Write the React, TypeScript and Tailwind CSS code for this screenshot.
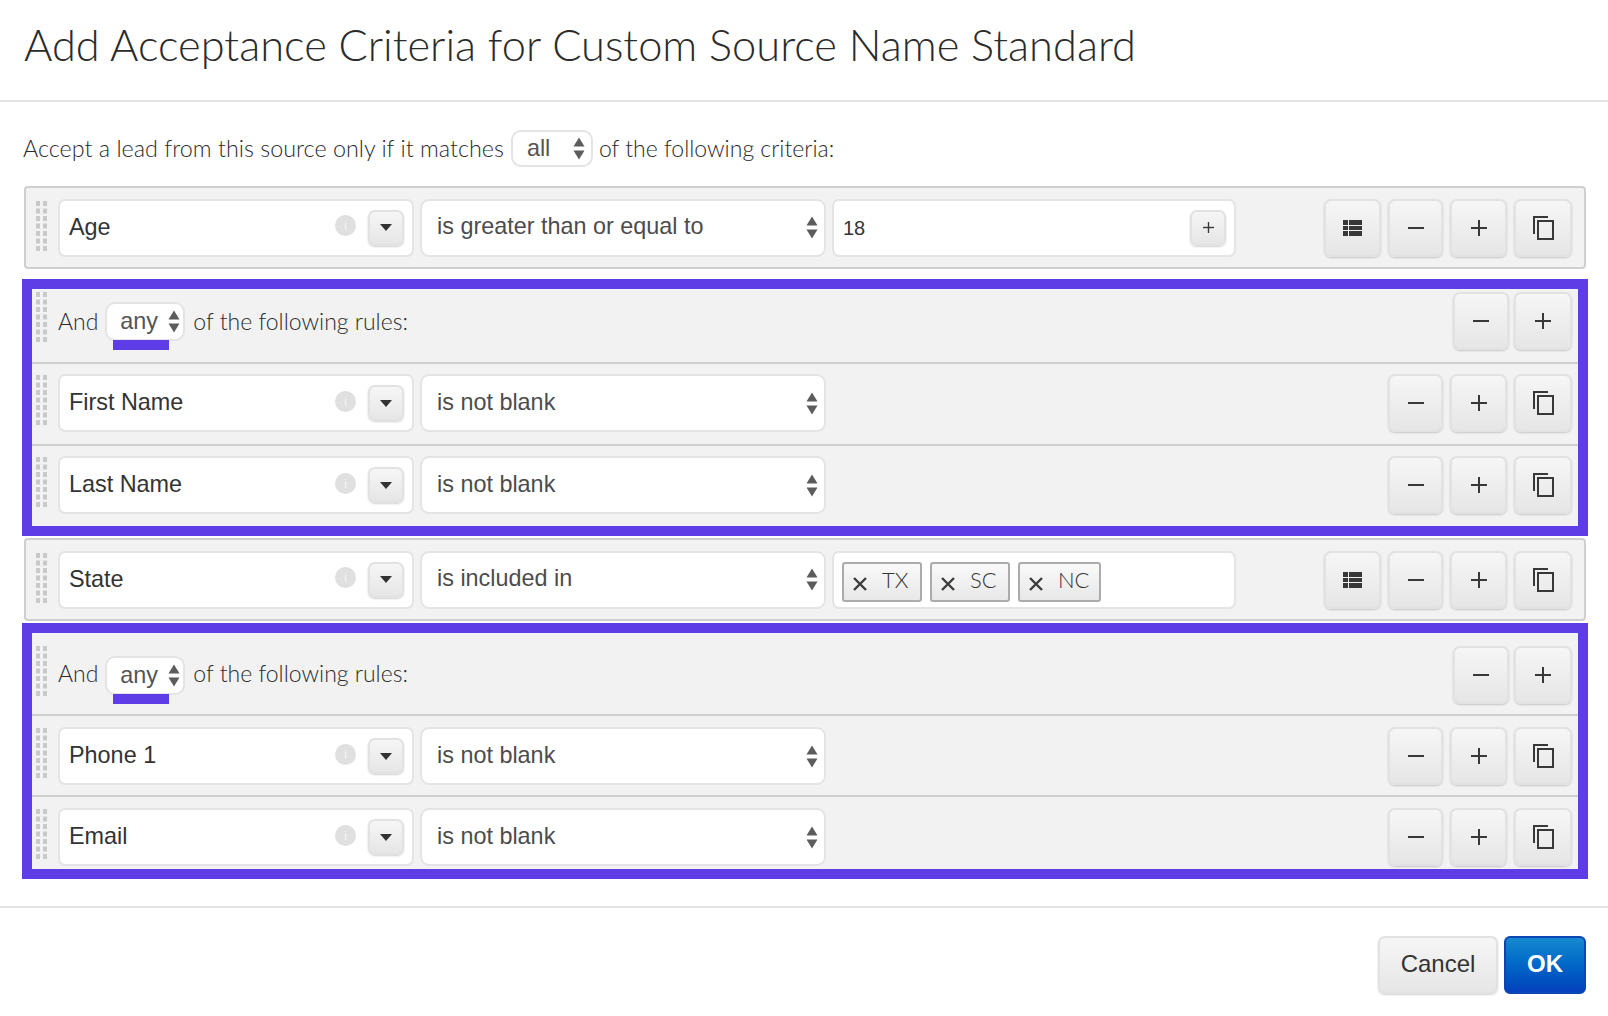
const proxima = "font-['Lato','Noto_Sans',sans-serif]"
const helv = "font-['Liberation_Sans',Arial,sans-serif]"

const btnClass =
  'flex items-center justify-center rounded-[7px] border-2 border-[#e2e2e2] bg-gradient-to-b from-[#f6f6f6] to-[#e6e6e6] shadow-[0_1px_2px_rgba(0,0,0,0.18)]'

const DragHandle = ({ rows = 7 }: { rows?: number }) => (
  <svg width="11" height={rows * 7.5} className="shrink-0">
    {Array.from({ length: rows }).map((_, i) => (
      <g key={i} fill="#c9c9c9">
        <rect x="0" y={i * 7.5} width="4" height="5" />
        <rect x="7" y={i * 7.5} width="4" height="5" />
      </g>
    ))}
  </svg>
)

const UpDown = () => (
  <svg width="12" height="23" viewBox="0 0 12 23" className="shrink-0">
    <path d="M6 0.5 L11.5 9.5 L0.5 9.5 Z" fill="#5c5c5c" />
    <path d="M6 22.5 L11.5 13.5 L0.5 13.5 Z" fill="#5c5c5c" />
  </svg>
)

const MinusIcon = () => (
  <svg width="16" height="16" viewBox="0 0 16 16">
    <rect x="0" y="7" width="16" height="2" fill="#383838" />
  </svg>
)

const PlusIcon = ({ size = 16 }: { size?: number }) => (
  <svg width={size} height={size} viewBox="0 0 16 16">
    <rect x="0" y="7" width="16" height="2" fill="#383838" />
    <rect x="7" y="0" width="2" height="16" fill="#383838" />
  </svg>
)

const CopyIcon = () => (
  <svg width="21" height="24" viewBox="0 0 21 24" fill="none" stroke="#383838" strokeWidth="2">
    <path d="M1 18 V1 H15" />
    <rect x="5" y="5" width="15" height="18" />
  </svg>
)

const TableIcon = () => (
  <svg width="19" height="16" viewBox="0 0 19 16">
    <rect x="0" y="0" width="19" height="16" fill="#383838" />
    <rect x="0" y="5" width="19" height="1" fill="#f0f0f0" />
    <rect x="0" y="10" width="19" height="1" fill="#f0f0f0" />
    <rect x="5" y="0" width="1" height="16" fill="#f0f0f0" />
  </svg>
)

const FieldPicker = ({ label }: { label: string }) => (
  <div className={`flex h-[58px] w-[356px] shrink-0 items-center rounded-[7px] border-2 border-[#e4e4e4] bg-white pl-[9px] pr-[8px] ${helv}`}>
    <span className="flex-1 text-[23.4px] text-[#333]">{label}</span>
    <span className="mr-[12px] mt-[-4px] flex h-[21px] w-[21px] items-center justify-center rounded-full bg-[#e0e0e0] text-[13px] leading-none text-[#f4f4f4]">
      i
    </span>
    <span className={`${btnClass} h-[36px] w-[36px]`}>
      <svg width="12" height="7" viewBox="0 0 12 7">
        <path d="M0 0 H12 L6 7 Z" fill="#333" />
      </svg>
    </span>
  </div>
)

const OperatorSelect = ({ label }: { label: string }) => (
  <div className={`ml-[6px] flex h-[58px] w-[406px] shrink-0 items-center rounded-[9px] border-2 border-[#e4e4e4] bg-white pl-[15px] pr-[6px] ${helv}`}>
    <span className="mt-[-1px] flex-1 text-[23.4px] text-[#4c4c4c]">{label}</span>
    <UpDown />
  </div>
)

const ValueBox = ({ children }: { children: React.ReactNode }) => (
  <div className={`ml-[6px] flex h-[58px] w-[404px] shrink-0 items-center rounded-[7px] border-2 border-[#e4e4e4] bg-white pl-[8px] pr-[8px] ${helv}`}>
    {children}
  </div>
)

const Chip = ({ label, width }: { label: string; width: number }) => (
  <div
    className={`flex h-[40px] shrink-0 items-center rounded-[3px] border-2 border-[#ababab] bg-gradient-to-b from-[#fafafa] to-[#e8e8e8] pl-[9px] ${proxima}`}
    style={{ width }}
  >
    <svg width="14" height="14" viewBox="0 0 14 14" className="mt-[4px]" stroke="#3c3c3c" strokeWidth="2.4" fill="none">
      <path d="M1 1 L13 13 M13 1 L1 13" />
    </svg>
    <span className="ml-[15px] mt-[-4px] text-[22px] font-light text-[#333]">{label}</span>
  </div>
)

const ActionButton = ({ width, children }: { width: number; children: React.ReactNode }) => (
  <div className={`${btnClass} h-[58px] shrink-0`} style={{ width }}>
    {children}
  </div>
)

const RowActions = ({ table = false }: { table?: boolean }) => (
  <div className="ml-auto flex items-center gap-[7px]">
    {table && (
      <ActionButton width={57}>
        <TableIcon />
      </ActionButton>
    )}
    <ActionButton width={55}>
      <MinusIcon />
    </ActionButton>
    <ActionButton width={57}>
      <PlusIcon />
    </ActionButton>
    <ActionButton width={58}>
      <CopyIcon />
    </ActionButton>
  </div>
)

const GroupHead = ({ topPad, textPad, selectClass = '' }: { topPad: string; textPad: string; selectClass?: string }) => (
  <div className={`flex items-start pl-[4px] pr-[6px] ${topPad}`}>
    <DragHandle />
    <div className={`ml-[11px] flex items-center text-[23px] font-light text-[#2b2b2b] ${proxima} ${textPad}`}>
      <span>And</span>
      <div className={`relative ml-[7px] flex h-[39px] w-[80px] items-center rounded-[10px] border-2 border-[#e4e4e4] bg-white pl-[13px] text-[23.4px] text-[#555] ${helv} ${selectClass}`}>
        <span className="flex-1">any</span>
        <span className="mr-[3px]">
          <UpDown />
        </span>
        <div className="absolute left-[6px] top-[36px] h-[10px] w-[56px] bg-[#5f3de6]" />
      </div>
      <span className="ml-[8px]">of the following rules:</span>
    </div>
    <div className="ml-auto flex gap-[5px]">
      <ActionButton width={56}>
        <MinusIcon />
      </ActionButton>
      <ActionButton width={58}>
        <PlusIcon />
      </ActionButton>
    </div>
  </div>
)

const GroupRow = ({ label, height, pad }: { label: string; height: string; pad: string }) => (
  <div className={`flex items-start border-t-2 border-[#cfcfcf] pl-[4px] pr-[6px] ${height} ${pad}`}>
    <div className="mt-[1px]">
      <DragHandle />
    </div>
    <div className="ml-[11px] flex items-center">
      <FieldPicker label={label} />
      <OperatorSelect label="is not blank" />
    </div>
    <RowActions />
  </div>
)

const Rule = ({ children }: { children: React.ReactNode }) => (
  <div className="mx-[2px] flex h-[83px] items-center rounded-[4px] border-2 border-[#cfcfcf] bg-[#f2f2f2] pl-[10px] pr-[12px]">
    <DragHandle />
    <div className="ml-[11px] flex flex-1 items-center">{children}</div>
  </div>
)

export default function App() {
  return (
    <div className={`flex h-[1016px] w-[1608px] flex-col overflow-hidden bg-white ${proxima}`}>
      <div className="flex h-[102px] shrink-0 items-center border-b-2 border-[#e3e3e3] pb-[10px] pl-[24px]">
        <h1 className="text-[43.4px] font-light text-[#2b2b2b]">Add Acceptance Criteria for Custom Source Name Standard</h1>
      </div>

      <div className="flex h-[84px] shrink-0 items-center pl-[23px] pt-[9px] text-[23.35px] font-light text-[#2b2b2b]">
        <span>Accept a lead from this source only if it matches</span>
        <div className={`ml-[7px] flex h-[37px] w-[82px] items-center rounded-[10px] border-2 border-[#e4e4e4] pl-[14px] pr-[6px] text-[23.4px] text-[#555] ${helv}`}>
          <span className="flex-1">all</span>
          <UpDown />
        </div>
        <span className="ml-[6px] text-[23px]">of the following criteria:</span>
      </div>

      <div className="ml-[22px] mr-[20px] flex flex-col">
        <Rule>
          <FieldPicker label="Age" />
          <OperatorSelect label="is greater than or equal to" />
          <ValueBox>
            <span className="flex-1 pl-[1px] text-[20px] text-[#333]">18</span>
            <span className={`${btnClass} h-[36px] w-[36px]`}>
              <PlusIcon size={11} />
            </span>
          </ValueBox>
          <RowActions table />
        </Rule>

        <div className="mt-[10px] border-[10px] border-[#5f3de6] bg-[#f2f2f2]">
          <div className="h-[73px]">
            <GroupHead topPad="pt-[3px]" textPad="pt-[10px]" />
          </div>
          <GroupRow label="First Name" height="h-[82px]" pad="pt-[10px]" />
          <GroupRow label="Last Name" height="h-[82px]" pad="pt-[10px]" />
        </div>

        <div className="mt-[2px]">
          <Rule>
            <FieldPicker label="State" />
            <OperatorSelect label="is included in" />
            <ValueBox>
              <div className="flex gap-[8px] pt-[4px]">
                <Chip label="TX" width={80} />
                <Chip label="SC" width={80} />
                <Chip label="NC" width={83} />
              </div>
            </ValueBox>
            <RowActions table />
          </Rule>
        </div>

        <div className="mt-[2px] border-[10px] border-[#5f3de6] bg-[#f2f2f2]">
          <div className="h-[81px]">
            <GroupHead topPad="pt-[13px]" textPad="pt-[8px]" selectClass="translate-y-[2px]" />
          </div>
          <GroupRow label="Phone 1" height="h-[81px]" pad="pt-[11px]" />
          <GroupRow label="Email" height="h-[74px]" pad="pt-[11px]" />
        </div>
      </div>

      <div className="mt-[27px] flex flex-1 items-start justify-end gap-[6px] border-t-2 border-[#e3e3e3] pr-[22px] pt-[28px]">
        <div className={`${btnClass} h-[58px] w-[120px] pb-[2px] text-[24px] text-[#333] ${helv}`}>Cancel</div>
        <div className={`flex h-[58px] w-[82px] items-center justify-center rounded-[6px] border-2 border-[#0a46b4] bg-gradient-to-b from-[#1789cf] to-[#0640bd] pb-[2px] text-[24px] font-bold text-white ${helv}`}>
          OK
        </div>
      </div>
    </div>
  )
}
